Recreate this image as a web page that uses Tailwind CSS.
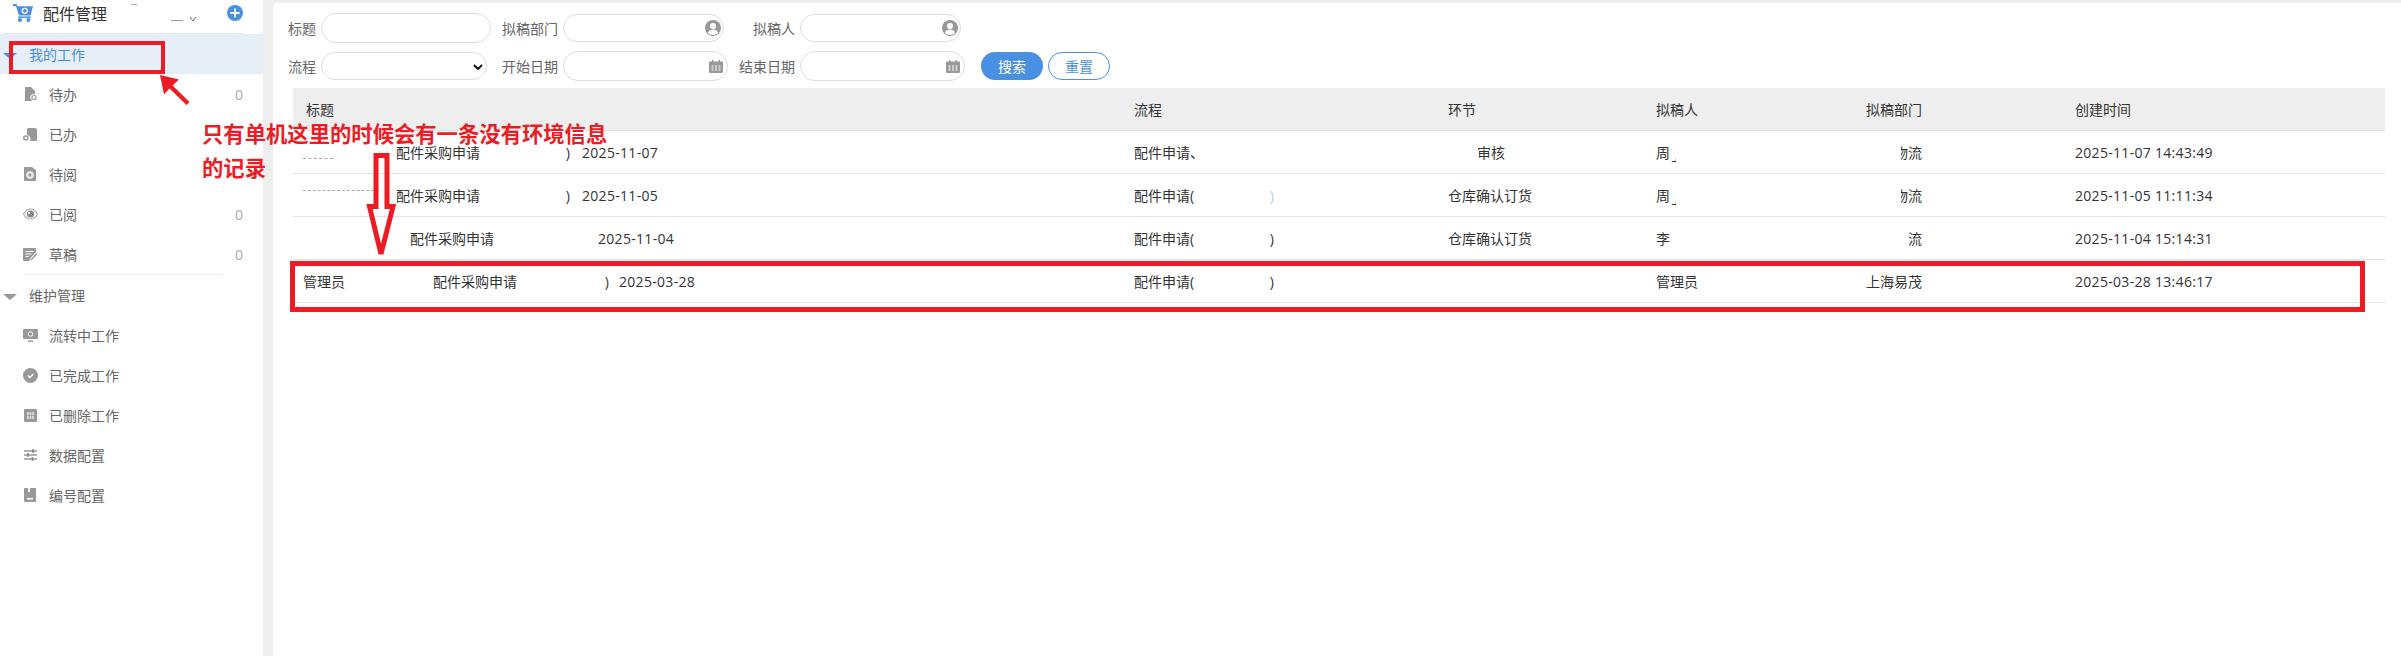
<!DOCTYPE html>
<html lang="zh">
<head>
<meta charset="utf-8">
<title>配件管理</title>
<script src="https://cdn.jsdelivr.net/npm/@tailwindcss/browser@4"></script>
</head>
<body class="relative w-[2401px] h-[656px] overflow-hidden bg-white font-['Open_Sans','Noto_Sans_CJK_SC',sans-serif] text-[14px] text-[#333]">
<div class="flex h-[656px]">
  <!-- sidebar -->
  <aside class="w-[263px] shrink-0 bg-white text-[#666]">
    <div class="relative h-[33px] mx-[3px] w-[240px] border-b border-[#e6e9ee] box-content flex items-center">
      <svg class="absolute left-[10px] top-[4px] w-[20px] h-[18px]" viewBox="0 0 20 18"><path d="M0 0h3.600l.8 2.200H20l-2.500 9.300H6L3 2.200H0z" fill="#4a90e2"/><path d="M5.200 12.400h12.600v1.500H5.200z" fill="#4a90e2"/><circle cx="7" cy="16" r="2" fill="#4a90e2"/><circle cx="15.400" cy="16" r="2" fill="#4a90e2"/><circle cx="11.800" cy="6.800" r="2.500" fill="none" stroke="#fff" stroke-width="1.300"/></svg>
      <span class="ml-[40px] text-[16px] leading-[28px] text-[#333] -mt-[5px]">配件管理</span>
      <span class="absolute left-[128px] top-[4px] w-[6px] h-[1px] bg-[#aaa]"></span>
      <span class="absolute left-[168px] top-[20px] w-[12px] h-[1px] bg-[#999]"></span>
      <svg class="absolute left-[186px] top-[17px] w-[8px] h-[5px]" viewBox="0 0 8 5"><path d="M1 0l3 4 3-4" fill="none" stroke="#666" stroke-width="1"/></svg>
      <svg class="absolute left-[224px] top-[5px] w-[16px] h-[16px]" viewBox="0 0 16 16"><circle cx="8" cy="8" r="8" fill="#4a90e2"/><path d="M8 3.400v9.200M3.400 8h9.200" stroke="#fff" stroke-width="1.800"/></svg>
    </div>

    <div class="h-[40px] bg-[#e6eff8] flex items-center text-[#4a90e2]">
      <svg class="ml-[3px] w-[14px] h-[6px] mt-[3px]" viewBox="0 0 14 6"><path d="M0 0h14L7 6z" fill="#4a90e2"/></svg>
      <span class="ml-[12px]">我的工作</span>
    </div>
    <div class="h-[40px] flex items-center pl-[24px] pr-[20px]">
      <svg class="w-[13px] h-[14px] mr-[12px]" viewBox="0 0 13 14"><path d="M1 0h6l4 4v3.500a3 3 0 0 0-3 5.500V14H1z" fill="#999"/><circle cx="10" cy="10.500" r="2" fill="none" stroke="#999" stroke-width="1.200"/></svg>
      <span>待办</span><span class="ml-auto text-[#aaa]">0</span>
    </div>
    <div class="h-[40px] flex items-center pl-[23px] pr-[20px]">
      <svg class="w-[14px] h-[13px] mr-[12px]" viewBox="0 0 14 13"><path d="M5 0h7a2 2 0 0 1 2 2v10a1 1 0 0 1-1 1H7a4 4 0 0 0-3-6V1a1 1 0 0 1 1-1z" fill="#999"/><circle cx="2.800" cy="10" r="2" fill="none" stroke="#999" stroke-width="1.500"/></svg>
      <span>已办</span>
    </div>
    <div class="h-[40px] flex items-center pl-[24px] pr-[20px]">
      <svg class="w-[12px] h-[14px] mr-[13px]" viewBox="0 0 12 14"><path d="M1 0h7l4 3v10a1 1 0 0 1-1 1H1a1 1 0 0 1-1-1V1a1 1 0 0 1 1-1z" fill="#999"/><circle cx="6" cy="8" r="3.400" fill="#ddd" stroke="#fff" stroke-width="0.800"/><circle cx="6" cy="8" r="1.400" fill="#999"/></svg>
      <span>待阅</span>
    </div>
    <div class="h-[40px] flex items-center pl-[23px] pr-[20px]">
      <svg class="w-[15px] h-[12px] mr-[11px]" viewBox="0 0 15 12"><path d="M.5 6C2.500 2.400 5 1 7.500 1s5 1.400 7 5c-2 3.600-4.500 5-7 5s-5-1.400-7-5z" fill="none" stroke="#aaa" stroke-width="1.200"/><circle cx="7.500" cy="6" r="3.600" fill="#888"/><circle cx="6" cy="5" r="1.100" fill="#fff"/></svg>
      <span>已阅</span><span class="ml-auto text-[#aaa]">0</span>
    </div>
    <div class="h-[40px] flex items-center pl-[23px] pr-[20px]">
      <svg class="w-[14px] h-[13px] mr-[12px]" viewBox="0 0 14 13"><path d="M1 0h11a1 1 0 0 1 1 1v3L7 10.500 6.500 13H1a1 1 0 0 1-1-1V1a1 1 0 0 1 1-1z" fill="#999"/><path d="M2.500 3.500h8M2.500 6h6M2.500 8.500h3" stroke="#fff" stroke-width="1"/><path d="M8 12l6-6.500" stroke="#999" stroke-width="1.500"/></svg>
      <span>草稿</span><span class="ml-auto text-[#aaa]">0</span>
    </div>
    <div class="ml-[23px] w-[200px] h-px bg-[#eee]"></div>

    <div class="h-[40px] flex items-center">
      <svg class="ml-[3px] w-[14px] h-[6px] mt-[3px]" viewBox="0 0 14 6"><path d="M0 0h14L7 6z" fill="#999"/></svg>
      <span class="ml-[12px]">维护管理</span>
    </div>
    <div class="h-[40px] flex items-center pl-[23px]">
      <svg class="w-[15px] h-[13px] mr-[11px]" viewBox="0 0 15 13"><path d="M1 0h13a1 1 0 0 1 1 1v8a1 1 0 0 1-1 1H1a1 1 0 0 1-1-1V1a1 1 0 0 1 1-1z" fill="#999"/><path d="M5 11.500h5V13H5z" fill="#999"/><circle cx="7.500" cy="5" r="2.300" fill="none" stroke="#fff" stroke-width="1"/></svg>
      <span>流转中工作</span>
    </div>
    <div class="h-[40px] flex items-center pl-[23px]">
      <svg class="w-[15px] h-[15px] mr-[11px]" viewBox="0 0 15 15"><circle cx="7.500" cy="7.500" r="7.500" fill="#999"/><path d="M4.800 7.500l2 2 3.500-3.500" fill="none" stroke="#fff" stroke-width="1.400"/></svg>
      <span>已完成工作</span>
    </div>
    <div class="h-[40px] flex items-center pl-[24px]">
      <svg class="w-[13px] h-[13px] mr-[12px]" viewBox="0 0 13 13"><rect width="13" height="13" rx="1" fill="#999"/><rect x="3" y="3" width="7" height="7" fill="#ddd"/><path d="M5.300 3v7M7.700 3v7M3 6.500h7" stroke="#999" stroke-width="0.800"/></svg>
      <span>已删除工作</span>
    </div>
    <div class="h-[40px] flex items-center pl-[24px]">
      <svg class="w-[13px] h-[12px] mr-[12px]" viewBox="0 0 13 12"><path d="M0 2h13M0 6h13M0 10h13" stroke="#999" stroke-width="1.300"/><path d="M8 .2h2v3.600H8zM3 4.200h2v3.600H3zM7.500 8.200h2v3.600h-2z" fill="#888"/></svg>
      <span>数据配置</span>
    </div>
    <div class="h-[40px] flex items-center pl-[24px]">
      <svg class="w-[12px] h-[14px] mr-[13px]" viewBox="0 0 12 14"><path d="M1 0h3v4h2V0h5a1 1 0 0 1 1 1v12a1 1 0 0 1-1 1H1a1 1 0 0 1-1-1V1a1 1 0 0 1 1-1z" fill="#999"/><path d="M3 10h6v1.500H3z" fill="#fff"/></svg>
      <span>编号配置</span>
    </div>
  </aside>

  <!-- main -->
  <main class="flex-1 bg-[#eee] pl-[10px] pt-[3px]">
    <div class="h-[653px] bg-white rounded-tl-[4px]">
      <!-- filters -->
      <form class="h-[85px] pl-[15px] pt-[10px] text-[#666]">
        <div class="flex items-center h-[30px]">
          <label class="w-[28px]">标题</label>
          <input class="ml-[5px] w-[170px] h-[30px] rounded-[15px] border border-[#ddd] bg-white">
          <label class="ml-[11px] w-[56px]">拟稿部门</label>
          <div class="relative ml-[5px] w-[161px] h-[28px] rounded-[14px] border border-[#ddd]">
            <svg class="absolute right-[2px] top-[5px] w-[16px] h-[16px]" viewBox="0 0 16 16"><circle cx="8" cy="8" r="8" fill="#999"/><circle cx="8" cy="6" r="3" fill="#fff"/><path d="M2.800 13c1-2.500 3-3.400 5.200-3.400s4.200.9 5.200 3.400a8 8 0 0 1-10.400 0z" fill="#fff"/></svg>
          </div>
          <label class="ml-[15px] w-[56px] text-right">拟稿人</label>
          <div class="relative ml-[5px] w-[161px] h-[28px] rounded-[14px] border border-[#ddd]">
            <svg class="absolute right-[2px] top-[5px] w-[16px] h-[16px]" viewBox="0 0 16 16"><circle cx="8" cy="8" r="8" fill="#999"/><circle cx="8" cy="6" r="3" fill="#fff"/><path d="M2.800 13c1-2.500 3-3.400 5.200-3.400s4.200.9 5.200 3.400a8 8 0 0 1-10.400 0z" fill="#fff"/></svg>
          </div>
        </div>
        <div class="flex items-center h-[30px] mt-[8px]">
          <label class="w-[28px]">流程</label>
          <div class="relative ml-[5px] w-[166px] h-[28px] rounded-[14px] border border-[#ddd]">
            <svg class="absolute right-[3px] top-[11px] w-[10px] h-[6px]" viewBox="0 0 10 6"><path d="M1 1l4 4 4-4" fill="none" stroke="#111" stroke-width="2"/></svg>
          </div>
          <label class="ml-[15px] w-[56px]">开始日期</label>
          <div class="relative ml-[5px] w-[165px] h-[30px] rounded-[15px] border border-[#ddd]">
            <svg class="absolute right-[4px] top-[8px] w-[14px] h-[13px]" viewBox="0 0 14 13"><path d="M1 1.500h12a1 1 0 0 1 1 1V12a1 1 0 0 1-1 1H1a1 1 0 0 1-1-1V2.500a1 1 0 0 1 1-1z" fill="#999"/><path d="M3 0h1.500v2H3zM9.500 0H11v2H9.500z" fill="#999"/><path d="M2.500 6h2M6 6h2M9.500 6h2M2.500 8h2M6 8h2M9.500 8h2M2.500 10h2M6 10h2M9.500 10h2" stroke="#fff" stroke-width="1"/></svg>
          </div>
          <label class="ml-[11px] w-[56px]">结束日期</label>
          <div class="relative ml-[5px] w-[165px] h-[30px] rounded-[15px] border border-[#ddd]">
            <svg class="absolute right-[4px] top-[8px] w-[14px] h-[13px]" viewBox="0 0 14 13"><path d="M1 1.500h12a1 1 0 0 1 1 1V12a1 1 0 0 1-1 1H1a1 1 0 0 1-1-1V2.500a1 1 0 0 1 1-1z" fill="#999"/><path d="M3 0h1.500v2H3zM9.500 0H11v2H9.500z" fill="#999"/><path d="M2.500 6h2M6 6h2M9.500 6h2M2.500 8h2M6 8h2M9.500 8h2M2.500 10h2M6 10h2M9.500 10h2" stroke="#fff" stroke-width="1"/></svg>
          </div>
          <button type="button" class="ml-[16px] w-[62px] h-[28px] rounded-[14px] bg-[#4a90e2] text-white">搜索</button>
          <button type="button" class="ml-[5px] w-[62px] h-[28px] rounded-[14px] border border-[#4a90e2] bg-white text-[#4a90e2]">重置</button>
        </div>
      </form>

      <!-- table -->
      <div class="ml-[20px] w-[2092px]">
        <div class="grid grid-cols-[831px_314px_208px_210px_209px_320px] h-[43px] bg-[#eee] border-b border-[#e3e3e3] items-center">
          <div class="pl-[13px]">标题</div><div class="pl-[10px]">流程</div><div class="pl-[10px]">环节</div><div class="pl-[10px]">拟稿人</div><div class="pl-[10px]">拟稿部门</div><div class="pl-[10px]">创建时间</div>
        </div>

        <div class="grid grid-cols-[831px_314px_208px_210px_209px_320px] h-[43px] border-b border-[#e3e3e3] items-center">
          <div class="pl-[10px] flex items-center">
            <span class="w-[93px] h-[14px] flex items-end"><span class="w-[30px] border-t border-dashed border-[#aaa]"></span></span>配件采购申请<span class="w-[90px] text-right">)</span><span class="ml-[12px] tracking-[0.3px]">2025-11-07</span>
          </div>
          <div class="pl-[10px]">配件申请、</div>
          <div class="pl-[39px]">审核</div>
          <div class="pl-[10px] flex items-center"><span>周</span><span class="w-[6px] h-[9px] overflow-hidden self-start mt-[13px]">书</span></div>
          <div class="pl-[45px] flex items-center"><span class="w-[7px] overflow-hidden flex justify-end"><span class="shrink-0">物</span></span><span>流</span></div>
          <div class="pl-[10px] tracking-[0.3px]">2025-11-07 14:43:49</div>
        </div>

        <div class="grid grid-cols-[831px_314px_208px_210px_209px_320px] h-[43px] border-b border-[#e3e3e3] items-center">
          <div class="pl-[10px] flex items-center">
            <span class="w-[93px] h-[14px] flex items-start"><span class="w-[76px] border-t border-dashed border-[#aaa] mt-[2px]"></span></span>配件采购申请<span class="w-[90px] text-right">)</span><span class="ml-[12px] tracking-[0.3px]">2025-11-05</span>
          </div>
          <div class="pl-[10px] flex w-[150px]"><span>配件申请(</span><span class="ml-auto text-[#bcd]">)</span></div>
          <div class="pl-[10px]">仓库确认订货</div>
          <div class="pl-[10px] flex items-center"><span>周</span><span class="w-[6px] h-[9px] overflow-hidden self-start mt-[13px]">书</span></div>
          <div class="pl-[45px] flex items-center"><span class="w-[7px] overflow-hidden flex justify-end"><span class="shrink-0">物</span></span><span>流</span></div>
          <div class="pl-[10px] tracking-[0.3px]">2025-11-05 11:11:34</div>
        </div>

        <div class="grid grid-cols-[831px_314px_208px_210px_209px_320px] h-[43px] border-b border-[#e3e3e3] items-center">
          <div class="pl-[10px] flex items-center">
            <span class="w-[107px]"></span>配件采购申请<span class="w-[104px]"></span><span class="tracking-[0.3px]">2025-11-04</span>
          </div>
          <div class="pl-[10px] flex w-[150px]"><span>配件申请(</span><span class="ml-auto">)</span></div>
          <div class="pl-[10px]">仓库确认订货</div>
          <div class="pl-[10px]">李</div>
          <div class="pl-[52px]">流</div>
          <div class="pl-[10px] tracking-[0.3px]">2025-11-04 15:14:31</div>
        </div>

        <div class="grid grid-cols-[831px_314px_208px_210px_209px_320px] h-[43px] border-b border-[#e3e3e3] items-center">
          <div class="pl-[10px] flex items-center">
            <span class="w-[130px]">管理员</span>配件采购申请<span class="w-[92px] text-right">)</span><span class="ml-[10px] tracking-[0.3px]">2025-03-28</span>
          </div>
          <div class="pl-[10px] flex w-[150px]"><span>配件申请(</span><span class="ml-auto">)</span></div>
          <div></div>
          <div class="pl-[10px]">管理员</div>
          <div class="pl-[10px]">上海易茂</div>
          <div class="pl-[10px] tracking-[0.3px]">2025-03-28 13:46:17</div>
        </div>
      </div>
    </div>
  </main>
</div>

<!-- annotations over the page -->
<div class="absolute left-[9px] top-[41px] w-[156px] h-[33px] border-[4px] border-[#ed1c24]"></div>
<div class="absolute left-[290px] top-[261px] w-[2075px] h-[51px] border-[5px] border-[#ed1c24]"></div>
<svg class="absolute left-0 top-0 w-[2401px] h-[656px] pointer-events-none" viewBox="0 0 2401 656">
  <path d="M160 75l19 4.500-6.500 6 17 16.500-3 3-17-16.500-5.500 6z" fill="#ed1c24"/>
  <path d="M376 155.500h11v51h6L381 254 369.500 206.500h6.500z" fill="none" stroke="#ed1c24" stroke-width="5"/>
</svg>
<div class="absolute left-[202px] top-[116px] text-[21.33px] leading-[34px] font-bold text-[#ed1c24] font-['Noto_Sans_CJK_SC',sans-serif] whitespace-nowrap">只有单机这里的时候会有一条没有环境信息<br>的记录</div>
</body>
</html>
